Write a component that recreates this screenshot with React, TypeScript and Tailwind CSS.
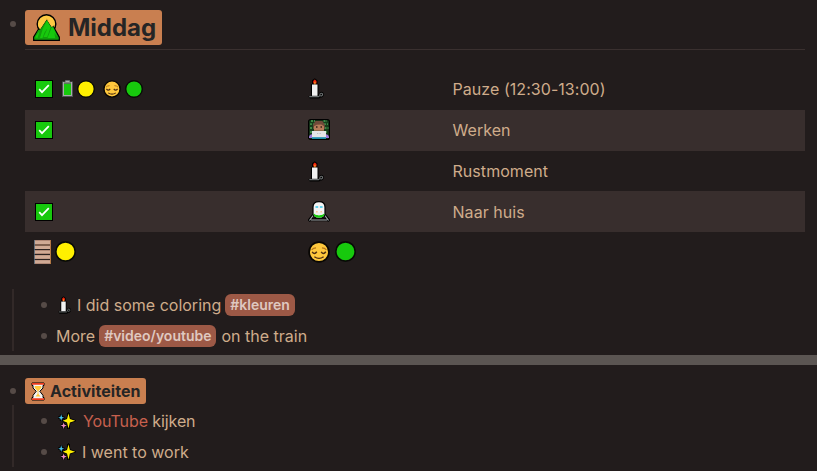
import type { ReactNode } from "react";

function Mountain() {
  return (
    <svg className="block h-[27px] w-[27px] shrink-0" viewBox="0 0 27 27">
      <circle cx="13.5" cy="10" r="9.3" fill="#ffca43" stroke="#000" strokeWidth="1.4" />
      <path d="M.7 26.3V23L5.3 15.5l2.2-.6L13.7 5.6l4.6 7.1 1.7-.6 6.3 11v3.2Z" fill="#129d0b" stroke="#000" strokeWidth="1.3" />
      <path d="M13.7 5.6 7.5 15l-1-.4L5 11l8.3-7 7.7 8-2.4 1Z" fill="#ffca43" />
      <path d="M1.5 25v-1.8L5.3 16l2.2-.8L13.7 6l4.6 7.2 1.7-.6 5.4 10.8V25Z" fill="#129d0b" />
      <path d="m2 23.3 4.7-6.5L4.5 24ZM7 24l2.8-9.3 4.2-8 1.8 5.8-4.3 6-2 5.5ZM14.5 24l3.8-9.8 1.8-1 4.4 9.8-3-4 .7 5Z" fill="#17c90d" />
      <path d="m14 6.5 3.7 6.5-3.5 10h-3.7l3.5-7.5Z" fill="#17c90d" />
    </svg>
  );
}

function Check() {
  return (
    <svg className="block h-[18px] w-[18px] shrink-0" viewBox="0 0 18 18">
      <rect x=".5" y=".5" width="17" height="17" fill="#17c90d" stroke="#000" />
      <path d="m4.2 9.2 2.8 3 6.8-7" fill="none" stroke="#fff" strokeWidth="1.7" />
    </svg>
  );
}

function Battery() {
  return (
    <svg className="block h-[17px] w-[11px] shrink-0" viewBox="0 0 11 17">
      <path d="M3 0h5v1.5h3V17H0V1.5h3Z" fill="#4e5354" />
      <path d="M3.5.8h4V2H10v14H1V2h2.5Z" fill="#a9aaaa" />
      <path d="M2 3.8h7V15H2Z" fill="#17c90d" />
      <path d="M2 2.5h7v1.3H2Z" fill="#4e6750" />
    </svg>
  );
}

function Dot({ size, color }: { size: number; color: string }) {
  return (
    <svg className="block shrink-0" width={size} height={size} viewBox="0 0 20 20">
      <circle cx="10" cy="10" r="9.2" fill={color} stroke="#080a06" strokeWidth="1.5" />
    </svg>
  );
}

function Face({ size }: { size: number }) {
  return (
    <svg className="block shrink-0" width={size} height={size} viewBox="0 0 20 20">
      <circle cx="10" cy="10" r="9" fill="#ffc83d" stroke="#080603" strokeWidth="1.6" />
      <path d="M3.3 8q1.5-1.7 4-1.7M12.7 6.3q2.6 0 4 1.7" fill="none" stroke="#b6751b" strokeWidth="1.1" />
      <path d="M3.8 9.8q2 3 4.2 0M12 9.8q2 3 4.2 0M5.8 14.3q4.2 3 8.4 0" fill="none" stroke="#4c2d12" strokeWidth="1.3" />
    </svg>
  );
}

function Candle({ w, h }: { w: number; h: number }) {
  return (
    <svg className="block shrink-0" width={w} height={h} viewBox="0 0 16 21" preserveAspectRatio="none">
      <path d="M.3 18h2.7V6h1V2.2L6.8.2l2.7 2v4h1v10h.6c.7-3.4 4.7-3 4.7.3 0 2.2-1.5 3.1-3.2 3.1l-1.4 1H1.8Z" fill="#000" />
      <path d="M5.2 5.5V3L6.8 1.4 8.5 3v2.5Z" fill="#f4220b" />
      <path d="M6.3 3.8h1.2v2.7H6.3Z" fill="#f7a329" />
      <path d="M4 6.5h5.5v11.3H4Z" fill="#f1f1f1" />
      <path d="M1.3 18.6h9.2l1.3-1c-.4-3 2.8-2.9 2.8-1.1 0 1.2-1.2 1.5-2.2 1.4" fill="none" stroke="#6c7071" strokeWidth="1.1" />
    </svg>
  );
}

function Technologist() {
  return (
    <svg className="block h-[21px] w-[22px]" viewBox="0 0 22 21">
      <rect x=".6" y=".6" width="20.8" height="19.8" rx="2" fill="#173b1b" stroke="#000" strokeWidth="1.2" />
      <path d="M2 5.2h4.5m9.5 0h4M2 9h4m10.5 0h4M2 13h3m12 0h3M3 2h4m8.5 0H19" stroke="#3b8745" strokeWidth="1.8" strokeDasharray="2 1" />
      <path d="M5.2 10V5.5L7.5 2h6.8l2.5 3.5V10Z" fill="#714a3a" />
      <path d="M6 7.2 8.7 5.8l4.6-.2L16 7.2v4.6H6Z" fill="#b77a59" />
      <path d="M8 8h1.5m3 0H14" stroke="#332119" strokeWidth="1.3" />
      <path d="M1 19q-.3-3.8 3.7-3.8h12.6q4 0 3.7 3.8Z" fill="#a078dd" />
      <path d="M4 12h14v6.5H4Z" fill="#e4e5e7" />
      <path d="M9 14.5h1.3m1.2 0h1.3" stroke="#bbbfc2" />
      <path d="M4 18.2h14v1.7H4Z" fill="#2299b5" />
    </svg>
  );
}

function Train() {
  return (
    <svg className="block h-[21px] w-[22px]" viewBox="0 0 22 21">
      <path d="m5.5 14-4.8 6M16.5 14l4.8 6M2.3 18.7h17.4" fill="none" stroke="#000" strokeWidth="3" />
      <path d="m5.5 14-4 5.5M16.5 14l4 5.5M3 19h16" fill="none" stroke="#a7abae" strokeWidth="1.2" />
      <path d="M5 13V6q0-5.3 6-5.3T17 6v7q0 4.3-6 4.3T5 13Z" fill="#f4f4f4" stroke="#000" strokeWidth="1.2" />
      <path d="M5.6 12.5q5.4 3.5 10.8 0v1.2q-1 3-5.4 3t-5.4-3Z" fill="#17c90d" />
      <path d="M6.7 11h8.6v2.3q-4.3 1.8-8.6 0Z" fill="#eee" />
      <path d="M7.5 6h2.7M11.9 6h2.7" stroke="#36c9ed" strokeWidth="1.7" />
      <path d="M8 10.8h1.7m2.7 0H14" stroke="#ffc79a" strokeWidth="1.5" />
    </svg>
  );
}

function Hourglass() {
  return (
    <svg className="block h-[19px] w-[14px] shrink-0" viewBox="0 0 14 19">
      <path d="M1 1h12v2.5h-1V6L8.8 9.3l3.2 4v2.2h1V18H1v-2.5h1v-2.2l3.2-4L2 6V3.5H1Z" fill="#f5f5f5" stroke="#000" />
      <path d="M3.7 4h6.6v2L7.4 9v3l2.2 2.5H4.5L6.6 12V9L3.7 6Z" fill="#ffc83d" />
      <path d="M1 1h12v1.8H1ZM1 16.2h12V18H1Z" fill="#ed3b1e" />
    </svg>
  );
}

function Sparkles() {
  return (
    <svg className="block h-[18px] w-[18px] shrink-0" viewBox="0 0 18 18">
      <path d="M10.5 1v16" stroke="#000" strokeWidth="3" />
      <path d="m10.5 1.5 1.4 5.5 5.3 1.8-5.3 1.7-1.4 6-1.5-6-4.3-1.7L9 7Z" fill="#fff000" stroke="#000" strokeWidth="1.5" paintOrder="stroke" />
      <path d="M3.2 2.5v6.5M.2 5.7h6.2" stroke="#000" strokeWidth="2.7" />
      <path d="m3.2 2.3.8 2.6 2.2.8-2.2.8-.8 2.6-.8-2.6-2.2-.8 2.2-.8Z" fill="#48c7f1" />
      <path d="M5.7 10.6v6M3 13.6h5.4" stroke="#000" strokeWidth="2.5" />
      <path d="m5.7 10.5.8 2.3 2.2.8-2.2.8-.8 2.6-.8-2.6-2.2-.8 2.2-.8Z" fill="#f08bc1" />
    </svg>
  );
}

function Bricks() {
  return (
    <svg className="block h-6 w-[17px]" viewBox="0 0 17 24">
      <path d="M0 0h17v24H0Z" fill="#b08876" />
      <path d="M1 1h15v3H1ZM1 6h15v3H1ZM1 11h15v2H1ZM1 15.5h15v3H1ZM1 20.5h15V23H1Z" fill="#d0aa95" />
      <path d="M0 9.5h17M0 14.5h17M0 19.5h17" stroke="#2b2220" />
      <path d="M0 5h17" stroke="#80604f" strokeWidth="2" />
      <path d="M.5 0v24" stroke="#476982" strokeWidth=".7" />
      <path d="M16.5 0v24" stroke="#b57843" />
    </svg>
  );
}

const Bullet = () => <span className="block h-1.5 w-1.5 shrink-0 rounded-full bg-[#564b47]" />;

function Row({ state, icon, label, shaded = false, raised = false }: { state?: ReactNode; icon: ReactNode; label?: string; shaded?: boolean; raised?: boolean }) {
  return (
    <div className={`grid grid-cols-[283px_144px_1fr] items-center ${shaded ? "bg-[#382e2d]" : ""} ${raised ? "pb-[2px]" : ""}`}>
      <div className="flex items-center pl-[10px]">{state}</div>
      <div className="flex items-center">{icon}</div>
      <div className="pl-[0.5px] leading-6 tracking-[0.05px]">{label}</div>
    </div>
  );
}

const Tag = ({ children }: { children: ReactNode }) => (
  <span className="flex h-[22px] items-center rounded-[6px] bg-[#9d5946] px-[5px] text-[14px] font-semibold text-[#dfc8c0]">{children}</span>
);

export default function App() {
  return (
    <main className="h-[471px] w-[817px] overflow-hidden whitespace-nowrap bg-[#221c1c] font-['Inter',sans-serif] text-base text-[#cfac8b]">
      <section className="h-[355px] pt-[10px]">
        <div className="flex h-[35px] pl-[10px]">
          <div className="mt-[11px] mr-[9px]"><Bullet /></div>
          <h1 className="flex h-[35px] w-[137px] items-center rounded-[3px] bg-[#c97f50] pl-2 text-[24px] font-bold text-[#252525]">
            <Mountain /><span className="ml-[8px]">Middag</span>
          </h1>
        </div>
        <div className="mt-1 ml-[25px] h-px w-[780px] bg-[#3a302f]" />
        <div className="mt-[19px] ml-[25px] grid h-[204px] w-[780px] grid-rows-[41px_41px_40px_41px_41px]">
          <Row raised state={<><Check /><span className="ml-[9px]"><Battery /></span><span className="ml-[4px]"><Dot size={18} color="#fff000" /></span><span className="ml-[8px]"><Face size={18} /></span><span className="ml-1"><Dot size={18} color="#17c90d" /></span></>} icon={<Candle w={16} h={21} />} label="Pauze (12:30-13:00)" />
          <Row raised shaded state={<Check />} icon={<Technologist />} label="Werken" />
          <Row icon={<Candle w={16} h={21} />} label="Rustmoment" />
          <Row shaded state={<Check />} icon={<Train />} label="Naar huis" />
          <Row raised state={<><div className="-ml-px"><Bricks /></div><span className="ml-1"><Dot size={21} color="#fff000" /></span></>} icon={<><Face size={22} /><span className="ml-[5px]"><Dot size={21} color="#17c90d" /></span></>} />
        </div>
        <ul className="mt-4 ml-3 h-[62px] border-l-2 border-[#322928] pl-[27px]">
          <li className="flex h-[31px] items-center"><Bullet /><span className="mr-[6px] ml-[11px]"><Candle w={13} h={18} /></span><span className="mr-1">I did some coloring</span><Tag>#kleuren</Tag></li>
          <li className="flex h-[31px] items-center"><Bullet /><span className="mr-1 ml-[9px]">More</span><Tag>#video/youtube</Tag><span className="ml-[5px]">on the train</span></li>
        </ul>
      </section>
      <div className="h-[10px] bg-[#5b5552]" />
      <section className="pt-[13px]">
        <div className="flex h-[26px] items-center pl-[10px]">
          <Bullet />
          <h2 className="ml-[9px] flex h-[26px] w-[121px] items-center rounded-[3px] bg-[#c97f50] pl-1.5 font-bold tracking-[0.05px] text-[#252525]"><Hourglass /><span className="ml-[5px]">Activiteiten</span></h2>
        </div>
        <ul className="mt-px ml-3 h-[62px] border-l-2 border-[#322928] pl-[27px]">
          <li className="flex h-[31px] items-center"><Bullet /><span className="mr-[7px] ml-[11px]"><Sparkles /></span><span className="tracking-[-0.1px]"><span className="text-[#c7604e]">YouTube</span> kijken</span></li>
          <li className="flex h-[31px] items-center"><Bullet /><span className="mr-[6px] ml-[11px]"><Sparkles /></span>I went to work</li>
        </ul>
      </section>
    </main>
  );
}
